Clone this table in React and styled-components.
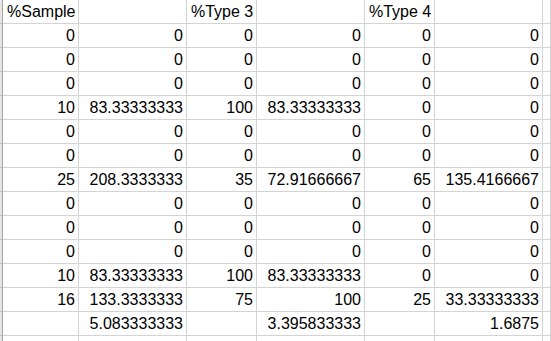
import styled, { createGlobalStyle } from "styled-components";

const GlobalStyle = createGlobalStyle`
    html, body {
        margin: 0;
        padding: 0;
        background: #ffffff;
    }
`;

const Sheet = styled.div`
    width: 551px;
    height: 341px;
    overflow: hidden;
    display: grid;
    grid-template-columns: 3px 76px 108px 70px 108px 70px 108px 1fr;
    grid-auto-rows: 24px;
    font-family: "Liberation Sans", Arial, sans-serif;
    font-size: 16px;
    color: #000000;
    background: #ffffff;
`;

const RowEdge = styled.div`
    background: #e6e6e6;
    border-right: 1px solid #a6a6a6;
    border-bottom: 1px solid #bdbdbd;
`;

const Cell = styled.div`
    box-sizing: border-box;
    display: flex;
    align-items: flex-end;
    justify-content: ${(p) => (p.$text ? "flex-start" : "flex-end")};
    padding: 0 3px 2px 4px;
    line-height: 18px;
    white-space: nowrap;
    overflow: hidden;
    border-right: 1px solid #d4d4d4;
    border-bottom: 1px solid #d4d4d4;
`;

const rows = [
    ["%Sample", "", "%Type 3", "", "%Type 4", ""],
    ["0", "0", "0", "0", "0", "0"],
    ["0", "0", "0", "0", "0", "0"],
    ["0", "0", "0", "0", "0", "0"],
    ["10", "83.33333333", "100", "83.33333333", "0", "0"],
    ["0", "0", "0", "0", "0", "0"],
    ["0", "0", "0", "0", "0", "0"],
    ["25", "208.3333333", "35", "72.91666667", "65", "135.4166667"],
    ["0", "0", "0", "0", "0", "0"],
    ["0", "0", "0", "0", "0", "0"],
    ["0", "0", "0", "0", "0", "0"],
    ["10", "83.33333333", "100", "83.33333333", "0", "0"],
    ["16", "133.3333333", "75", "100", "25", "33.33333333"],
    ["", "5.083333333", "", "3.395833333", "", "1.6875"],
    ["", "", "", "", "", ""],
];

function App() {
    return (
        <>
            <GlobalStyle />
            <Sheet>
                {rows.map((row, r) => [
                    <RowEdge key={`e${r}`} />,
                    ...row.map((value, c) => (
                        <Cell key={`${r}-${c}`} $text={value.startsWith("%")}>
                            {value}
                        </Cell>
                    )),
                    <Cell key={`${r}-g`} />,
                ])}
            </Sheet>
        </>
    );
}

export default App;
